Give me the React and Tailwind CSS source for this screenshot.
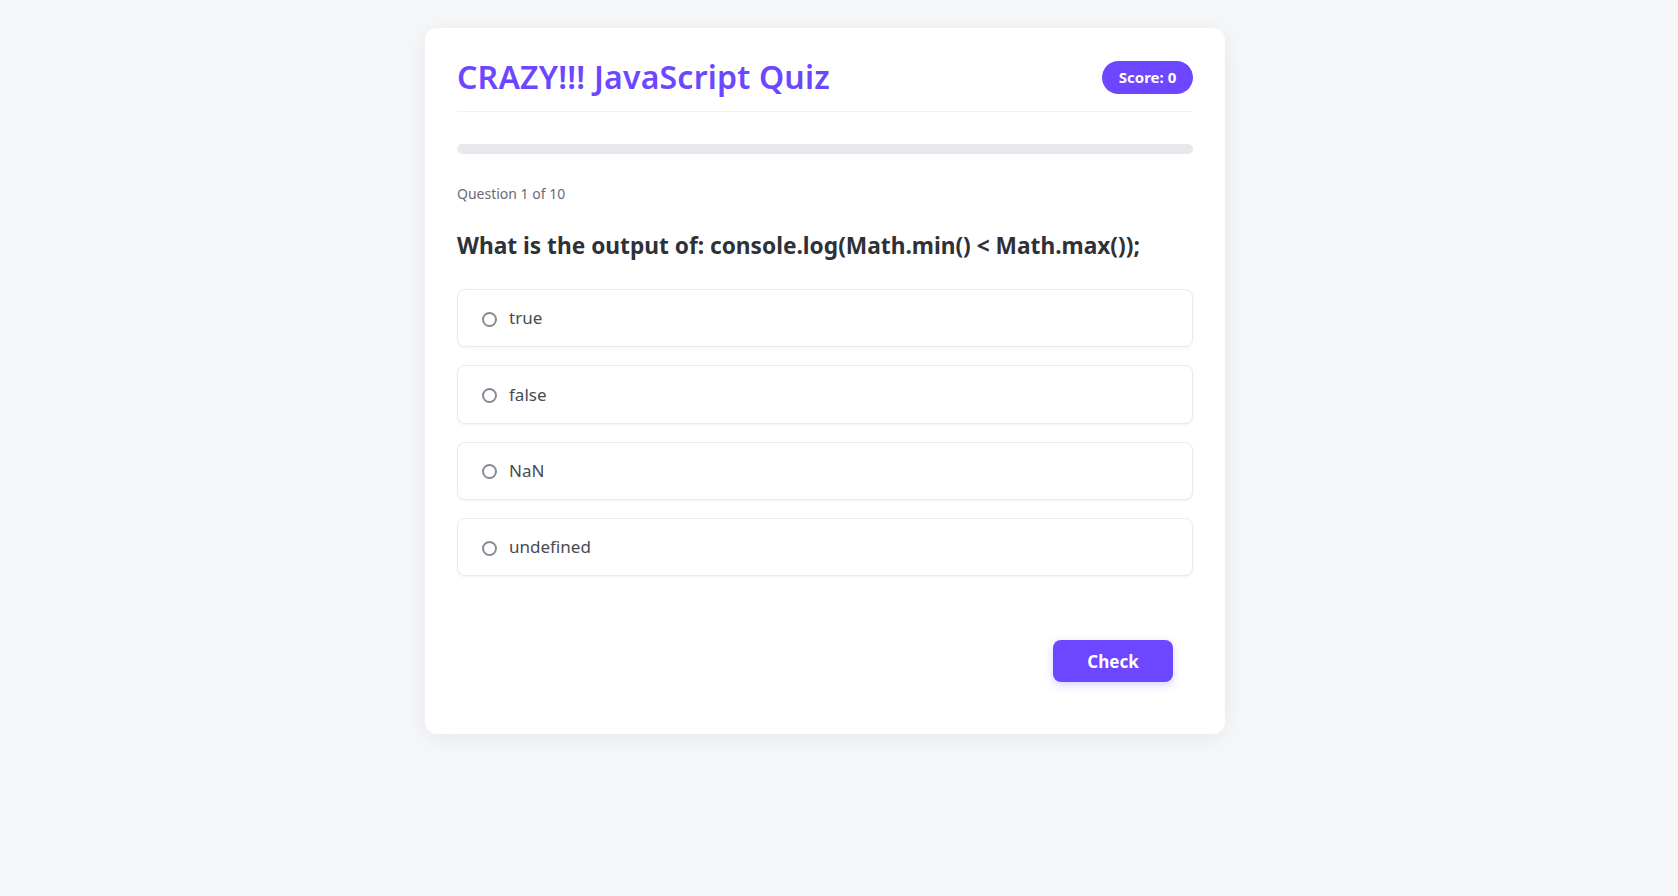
import React from "react";

const options = ["true", "false", "NaN", "undefined"];

export default function App() {
  return (
    <div className="min-h-screen bg-[#f6f7f9] pt-[28px] pb-10 font-['Noto_Sans','Liberation_Sans',sans-serif]">
      <div className="flex justify-center pr-[28px]">
        <div className="w-[800px] rounded-xl bg-white p-8 pb-[32px] shadow-[0_4px_24px_rgba(15,23,42,0.07)]">
          <div className="flex h-[52px] items-start border-b border-[#eef0f3]">
            <div className="flex h-[34px] w-full items-center justify-between">
              <h1 className="text-[32px] font-semibold leading-none tracking-[0.2px] text-[#6c47ff]">CRAZY!!! JavaScript Quiz</h1>
              <div className="flex h-[33px] w-[91px] items-center justify-center rounded-full bg-[#6c47ff] text-[15px] font-bold text-white">
                Score: 0
              </div>
            </div>
          </div>
          <div className="mt-[32px] h-[10px] rounded-full bg-[#e6e8ec]" />
          <div className="mt-[30px] text-[14px] leading-[20px] text-[#6b6b76]">Question 1 of 10</div>
          <h2 className="mt-[26px] text-[22.7px] font-bold leading-[32px] text-[#2f3137]">
            What is the output of: console.log(Math.min() &lt; Math.max());
          </h2>
          <div className="mt-[27px] flex flex-col gap-[18px]">
            {options.map((o) => (
              <div
                key={o}
                className="flex h-[58.33px] items-center rounded-lg border border-[#e9ebef] bg-white pl-[24px] shadow-[0_1px_3px_rgba(0,0,0,0.05)]"
              >
                <span className="mt-[2px] h-[15px] w-[15px] rounded-full border-2 border-[#8a8a96]" />
                <span className="ml-[12px] text-[17px] text-[#4a4a52]">{o}</span>
              </div>
            ))}
          </div>
          <div className="mt-[64px] flex justify-end pr-5 pb-5">
            <button className="h-[42px] w-[120px] rounded-lg bg-[#6c47ff] text-[17px] font-bold text-white shadow-[0_3px_8px_rgba(108,71,255,0.25)]">
              Check
            </button>
          </div>
        </div>
      </div>
    </div>
  );
}
